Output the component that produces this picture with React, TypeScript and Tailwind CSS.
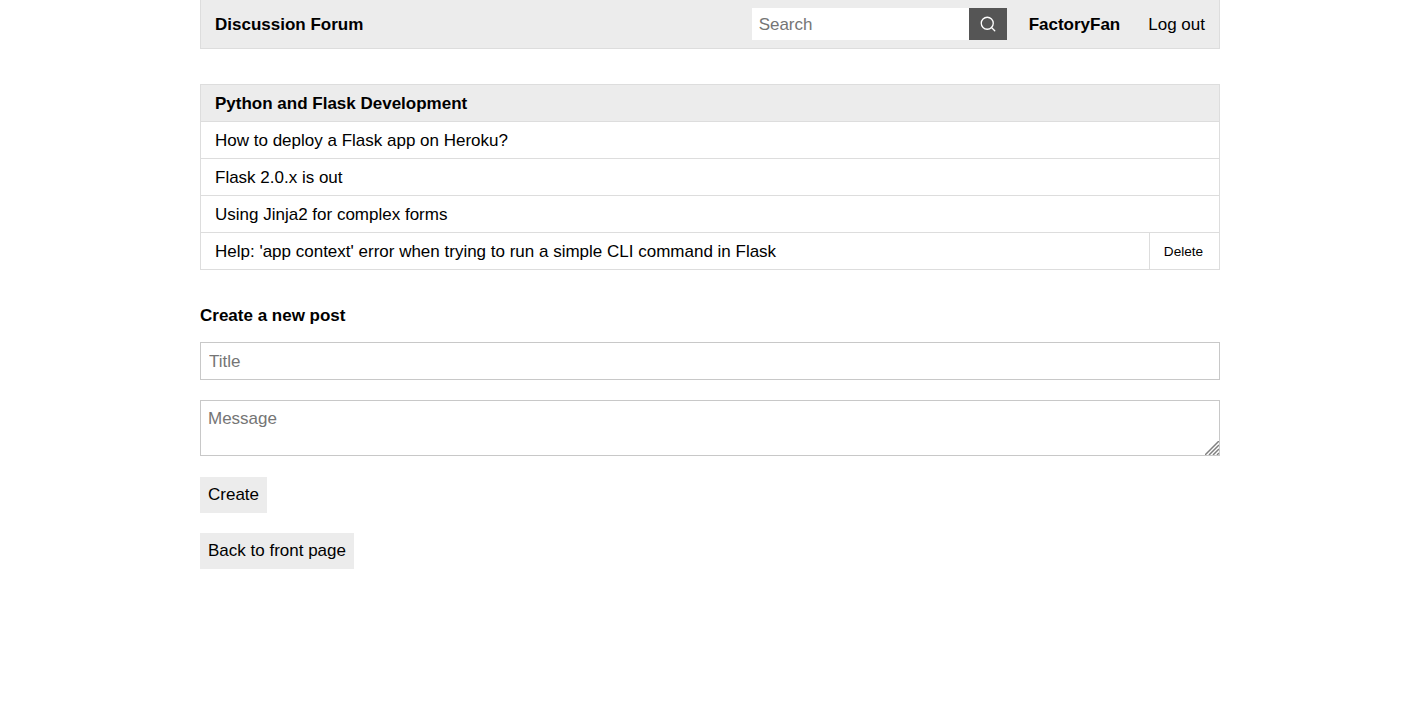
import React from 'react'
import { Search } from 'lucide-react'

const posts = [
  'How to deploy a Flask app on Heroku?',
  'Flask 2.0.x is out',
  'Using Jinja2 for complex forms',
]

export default function App() {
  return (
    <div className="w-[1020px] mx-auto font-['Liberation_Sans',Arial,sans-serif] text-[17px] text-black bg-white min-h-[722px]">
      <nav className="h-[49px] flex items-center bg-[#ececec] border border-t-0 border-[#dddddd] px-[14px]">
        <a href="#" className="font-bold pt-px">Discussion Forum</a>
        <form className="flex ml-auto">
          <input placeholder="Search" className="w-[217px] h-8 bg-white px-[7px] pt-px outline-none placeholder:text-[#757575]" />
          <button type="button" className="w-[38px] h-8 bg-[#555555] flex items-center justify-center">
            <Search size={18} color="#fff" strokeWidth={1.75} />
          </button>
        </form>
        <span className="ml-[22px] font-bold pt-px">FactoryFan</span>
        <a href="#" className="ml-[28px] pt-px">Log out</a>
      </nav>

      <div className="mt-[35px] border border-[#dddddd]">
        <div className="h-[36px] flex items-center bg-[#ececec] pl-[14px] pt-px font-bold">Python and Flask Development</div>
        {posts.map(p => (
          <div key={p} className="h-[37px] flex items-center border-t border-[#dddddd] pl-[14px] pt-px">{p}</div>
        ))}
        <div className="h-[37px] flex items-center border-t border-[#dddddd] pl-[14px]">
          <span className="pt-px">Help: 'app context' error when trying to run a simple CLI command in Flask</span>
          <button className="ml-auto h-full w-[70px] border-l border-[#dddddd] text-[13.6px] pt-[2px] pr-[2px]">Delete</button>
        </div>
      </div>

      <h2 className="mt-[36px] font-bold leading-[20px]">Create a new post</h2>
      <form className="mt-[16px] flex flex-col items-start">
        <input placeholder="Title" className="w-full h-[38px] border border-[#c8c8c8] px-2 pt-px outline-none placeholder:text-[#757575]" />
        <div className="relative w-full mt-5">
          <textarea placeholder="Message" className="w-full h-[56px] block resize-none border border-[#c8c8c8] px-[7px] pt-[8px] leading-[20px] outline-none placeholder:text-[#757575]" />
          <svg className="absolute right-px bottom-px" width="14" height="14" viewBox="0 0 14 14" stroke="#808080" strokeWidth="1.5" fill="none">
            <path d="M0 14 14 0M4 14 14 4M8 14 14 8M12 14 14 12" />
          </svg>
        </div>
        <button type="button" className="mt-[21px] h-9 px-2 bg-[#ececec]">Create</button>
      </form>
      <button className="mt-5 h-9 px-2 bg-[#ececec] block">Back to front page</button>
    </div>
  )
}
